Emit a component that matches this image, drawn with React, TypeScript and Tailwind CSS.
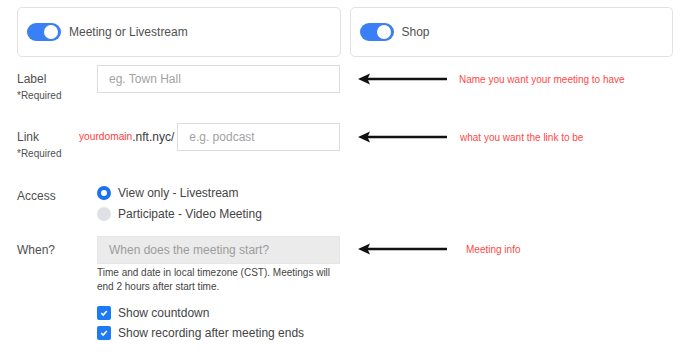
const Toggle = () => (
  <div className="relative h-[18px] w-[34px] rounded-full bg-[#3a7ff6]">
    <div className="absolute right-[3px] top-[2px] h-[14px] w-[14px] rounded-full bg-white" />
  </div>
);

const Arrow = () => (
  <svg width="89" height="12" viewBox="0 0 89 12">
    <line x1="9" y1="6" x2="89" y2="6" stroke="#111" strokeWidth="2.5" />
    <polygon points="0,6 12,0.5 9.5,6 12,11.5" fill="#111" />
  </svg>
);

const Note = ({ text, gap }: { text: string; gap: string }) => (
  <div className="flex h-[28px] items-center pl-[18px]">
    <Arrow />
    <span className={`${gap} text-[10px] text-[#ff4848]`}>{text}</span>
  </div>
);

const Label = ({ title, required }: { title: string; required?: boolean }) => (
  <div className="flex flex-col pt-[6px]">
    <span className="text-[12px] leading-[16px] text-[#4f4f4f]">{title}</span>
    {required && <span className="mt-[2px] text-[10px] leading-[14px] text-[#4f4f4f]">*Required</span>}
  </div>
);

const Check = ({ text }: { text: string }) => (
  <div className="flex h-[20px] items-center gap-[7px]">
    <div className="flex h-[14px] w-[14px] items-center justify-center rounded-[2px] bg-[#1d7af5]">
      <svg width="8" height="8" viewBox="0 0 8 8">
        <path d="M1.3 4.2 L3.2 6 L6.8 2" stroke="white" strokeWidth="1.6" fill="none" />
      </svg>
    </div>
    <span className="text-[12px] text-[#444]">{text}</span>
  </div>
);

export default function App() {
  return (
    <div
      className="w-[688px] h-[358px] bg-white pl-[17px] pr-[15px] pt-[7px]"
      style={{ fontFamily: '"Liberation Sans", Arial, sans-serif' }}
    >
      <div className="grid grid-cols-2 gap-[9px]">
        <div className="flex h-[50px] items-center gap-[8px] rounded-[5px] border border-[#e1e1e1] pl-[9px]">
          <Toggle />
          <span className="text-[12px] text-[#505050]">Meeting or Livestream</span>
        </div>
        <div className="flex h-[50px] items-center gap-[8px] rounded-[5px] border border-[#e1e1e1] pl-[9px]">
          <Toggle />
          <span className="text-[12px] text-[#505050]">Shop</span>
        </div>
      </div>

      {/* Label */}
      <div className="mt-[8px] flex items-start">
        <div className="flex w-[323px]">
          <div className="w-[80px]">
            <Label title="Label" required />
          </div>
          <div className="flex h-[28px] w-[243px] items-center border border-[#dcdcdc] px-[11px] text-[12px] text-[#a3a3a3]">
            eg. Town Hall
          </div>
        </div>
        <Note text="Name you want your meeting to have" gap="ml-[12px]" />
      </div>

      {/* Link */}
      <div className="mt-[20px] flex items-start">
        <div className="flex w-[323px]">
          <div className="w-[62px]">
            <Label title="Link" required />
          </div>
          <div className="flex h-[28px] items-center">
            <span className="text-[10.2px] text-[#ff4040]">yourdomain</span>
            <span className="text-[12px] text-[#3a3a3a]">.nft.nyc/</span>
          </div>
          <div className="ml-[3px] flex h-[28px] flex-1 items-center border border-[#dcdcdc] px-[11px] text-[12px] text-[#a3a3a3]">
            e.g. podcast
          </div>
        </div>
        <Note text="what you want the link to be" gap="ml-[13px]" />
      </div>

      {/* Access */}
      <div className="mt-[21px] flex items-start">
        <div className="w-[80px]">
          <Label title="Access" />
        </div>
        <div className="flex flex-col">
          <div className="flex h-[21px] items-center gap-[7px]">
            <div className="h-[14px] w-[14px] rounded-full border-[4px] border-[#1a73f0] bg-white" />
            <span className="text-[12px] text-[#444]">View only - Livestream</span>
          </div>
          <div className="flex h-[21px] items-center gap-[7px]">
            <div className="h-[14px] w-[14px] rounded-full bg-[#dfe1e6]" />
            <span className="text-[12px] text-[#444]">Participate - Video Meeting</span>
          </div>
        </div>
      </div>

      {/* When */}
      <div className="mt-[12px] flex items-start">
        <div className="flex w-[323px]">
          <div className="w-[80px]">
            <Label title="When?" />
          </div>
          <div className="flex w-[243px] flex-col">
            <div className="flex h-[28px] items-center border border-[#e6e6e6] bg-[#ebebeb] px-[11px] text-[12px] text-[#9c9c9c]">
              When does the meeting start?
            </div>
            <p className="mt-[2px] text-[10px] leading-[14px] text-[#444]">
              Time and date in local timezone (CST). Meetings will end 2 hours after start time.
            </p>
            <div className="mt-[9px] flex flex-col">
              <Check text="Show countdown" />
              <Check text="Show recording after meeting ends" />
            </div>
          </div>
        </div>
        <div className="-mt-[1px]">
          <Note text="Meeting info" gap="ml-[19px]" />
        </div>
      </div>
    </div>
  );
}
